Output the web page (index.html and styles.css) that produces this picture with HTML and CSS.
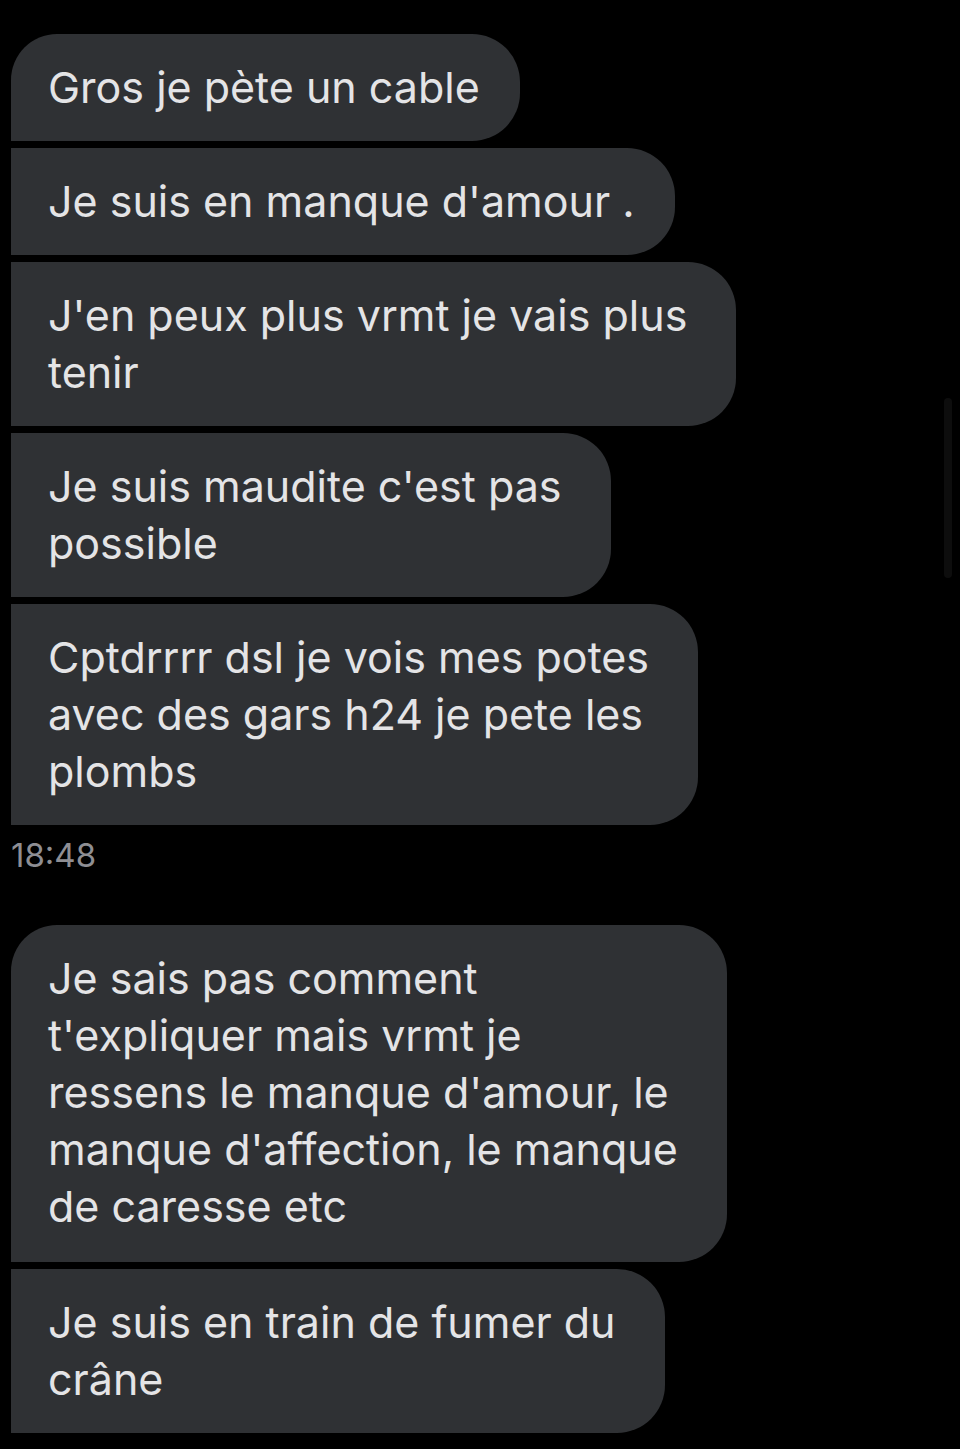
FILE: index.html
```html
<!DOCTYPE html>
<html lang="fr">
<head>
<meta charset="utf-8">
<link rel="stylesheet" href="styles.css">
</head>
<body>
<main class="thread">
  <section class="group">
    <div class="bubble first">Gros je pète un cable</div>
    <div class="bubble">Je suis en manque d'amour .</div>
    <div class="bubble multi">J'en peux plus vrmt je vais plus<br>tenir</div>
    <div class="bubble multi">Je suis maudite c'est pas<br>possible</div>
    <div class="bubble multi">Cptdrrrr dsl je vois mes potes<br>avec des gars h24 je pete les<br>plombs</div>
  </section>
  <div class="time">18:48</div>
  <section class="group">
    <div class="bubble first multi tall">Je sais pas comment<br>t'expliquer mais vrmt je<br>ressens le manque d'amour, le<br>manque d'affection, le manque<br>de caresse etc</div>
    <div class="bubble multi">Je suis en train de fumer du<br>crâne</div>
  </section>
</main>
<div class="scrollbar"></div>
</body>
</html>
```
FILE: styles.css
```css
html, body {
  margin: 0;
  padding: 0;
  background: #000;
  height: 100%;
}
body {
  font-family: "Inter", "Roboto", "Liberation Sans", sans-serif;
  color: #e4e4e6;
  overflow: hidden;
}
.thread {
  padding: 34px 0 0 11px;
  display: flex;
  flex-direction: column;
}
.group {
  display: flex;
  flex-direction: column;
  align-items: flex-start;
  gap: 7px;
}
.bubble {
  background: #2f3134;
  font-size: 43px;
  line-height: 57px;
  padding: 25px 40px 25px 37px;
  border-radius: 0 48px 48px 0;
  white-space: nowrap;
}
.bubble.multi {
  padding-right: 49px;
}
.bubble.tall {
  padding-bottom: 27px;
}
.bubble.first {
  border-top-left-radius: 46px;
}
.time {
  color: #8e8e93;
  font-size: 33px;
  line-height: 38px;
  padding: 11px 0 0 0;
  height: 89px;
}
.scrollbar {
  position: fixed;
  right: 8px;
  top: 398px;
  width: 8px;
  height: 180px;
  border-radius: 4px;
  background: #0d0d0d;
}
```
